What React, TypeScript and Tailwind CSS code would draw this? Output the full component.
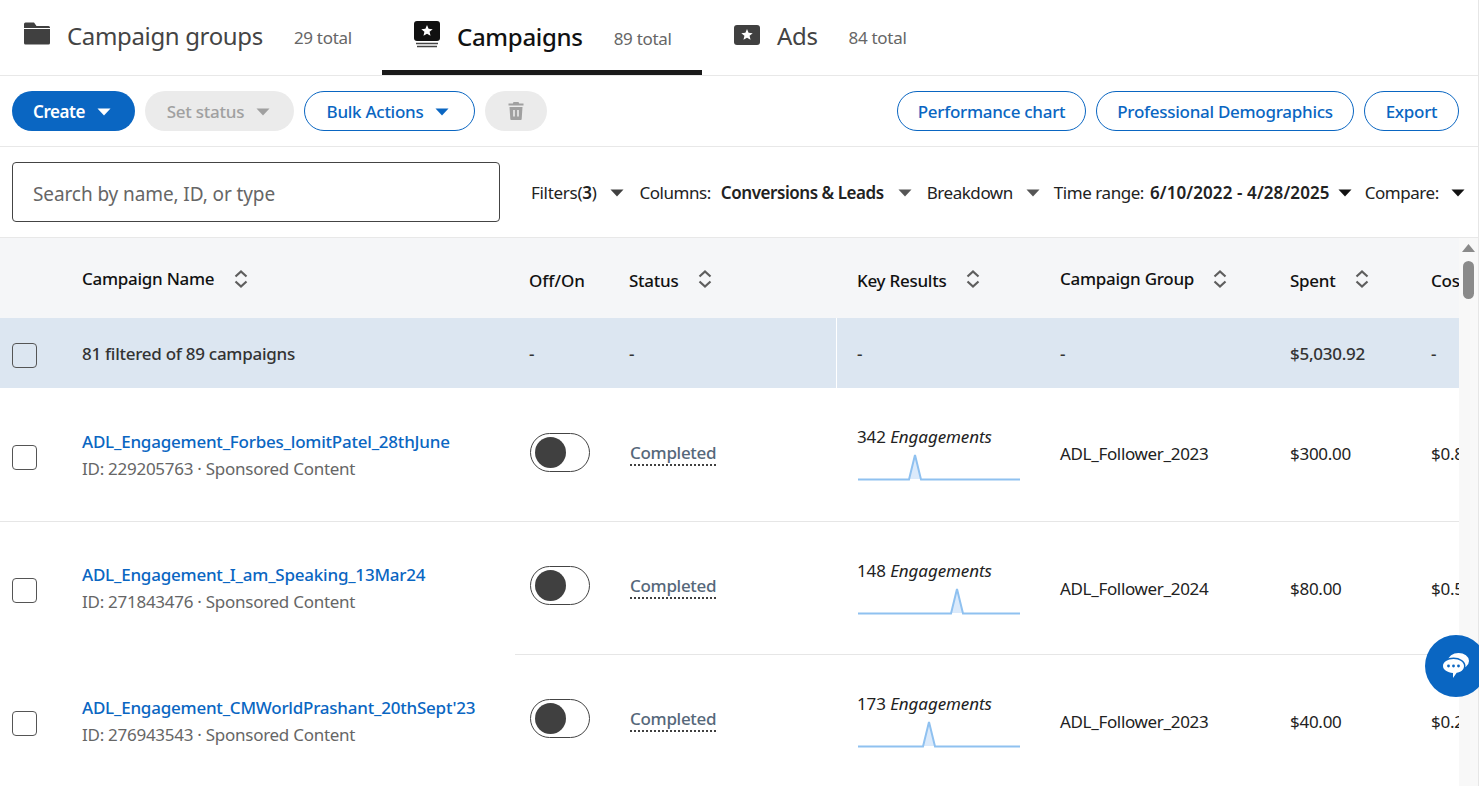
import React from 'react';

const campaigns = [
  { name: 'ADL_Engagement_Forbes_lomitPatel_28thJune', id: '229205763', results: '342', group: 'ADL_Follower_2023', spent: '$300.00', cost: '$0.88', peak: 57, line: true },
  { name: 'ADL_Engagement_I_am_Speaking_13Mar24', id: '271843476', results: '148', group: 'ADL_Follower_2024', spent: '$80.00', cost: '$0.54', peak: 99, line: false },
  { name: "ADL_Engagement_CMWorldPrashant_20thSept'23", id: '276943543', results: '173', group: 'ADL_Follower_2023', spent: '$40.00', cost: '$0.23', peak: 71, line: false },
];

function Caret({ color = '#404040', className = '' }: { color?: string; className?: string }) {
  return (
    <svg width="14" height="8" viewBox="0 0 14 8" className={className}>
      <path d="M0.5 0.5h13L7 7.5z" fill={color} />
    </svg>
  );
}

function SortIcon({ className = '' }: { className?: string }) {
  return (
    <svg width="16" height="20" viewBox="0 0 16 20" fill="none" stroke="#5e5e5e" strokeWidth="2.2" className={className}>
      <path d="M2.5 7.5 8 2.5l5.5 5M2.5 12.5 8 17.5l5.5-5" />
    </svg>
  );
}

function Star({ cx, cy, r }: { cx: number; cy: number; r: number }) {
  const pts = Array.from({ length: 10 }, (_, i) => {
    const a = -Math.PI / 2 + (i * Math.PI) / 5;
    const d = i % 2 === 0 ? r : r * 0.45;
    return `${cx + d * Math.cos(a)},${cy + d * Math.sin(a)}`;
  }).join(' ');
  return <polygon points={pts} fill="#fff" />;
}

function Sparkline({ peak }: { peak: number }) {
  return (
    <svg width="162" height="32" viewBox="0 0 162 32" className="block mt-[2px] ml-px">
      <path d={`M${peak - 6} 29 L${peak} 5 L${peak + 6} 29z`} fill="#dbeafb" />
      <path d={`M0 29.5H${peak - 6}L${peak} 5L${peak + 6} 29.5H162`} fill="none" stroke="#8fc1f0" strokeWidth="2" />
    </svg>
  );
}

function Tab({ icon, label, total, active, width }: { icon: React.ReactNode; label: string; total: string; active?: boolean; width: string }) {
  return (
    <div className={`flex items-center h-full ${width} ${active ? 'border-b-[5px] border-[#1a1a1a] pt-[3px]' : 'pb-[4px]'}`}>
      {icon}
      <span className={`text-[24px] leading-none ${active ? 'text-[#111] font-medium tracking-[-0.3px]' : 'text-[#444] tracking-[-0.35px]'}`}>{label}</span>
      <span className="text-[17px] text-[#666] ml-[31px] mt-[5px] tracking-[-0.3px]">{total}</span>
    </div>
  );
}

function Outline({ children, width }: { children: React.ReactNode; width: string }) {
  return (
    <button className={`h-10 ${width} flex items-center justify-center gap-[12px] rounded-full border border-[#0a66c2] text-[#0a66c2] text-[17px] font-medium tracking-[-0.28px] pt-[2px]`}>
      {children}
    </button>
  );
}

function Row({ c, border }: { c: (typeof campaigns)[number]; border: boolean }) {
  const valueOffset = border ? '-mt-[2px]' : 'mt-[2px]';
  return (
    <div className="relative flex items-center h-[133px] shrink-0 text-[17px] tracking-[-0.27px]">
      <div className="w-[82px] pl-3 shrink-0 mt-[6px]">
        <div className="w-[25px] h-[25px] rounded-[4px] border border-[#555] bg-white" />
      </div>
      <div className="w-[447px] shrink-0 mt-[2px]">
        <div className="font-medium text-[#0a66c2] leading-[26px] tracking-[-0.22px]">{c.name}</div>
        <div className="text-[#666] leading-[28px]">ID: {c.id} · Sponsored Content</div>
      </div>
      <div className="w-[100px] shrink-0">
        <div className="ml-px w-[60px] h-[39px] rounded-full border border-[#444] flex items-center pl-[4px] bg-white -mt-[5px]">
          <div className="w-[31px] h-[31px] rounded-full bg-[#404040]" />
        </div>
      </div>
      <div className="w-[228px] shrink-0 -mt-[4px]">
        <span className="ml-px text-[#56687a] font-medium tracking-[-0.3px] border-b-2 border-dotted border-[#404040] leading-[22px] inline-block">Completed</span>
      </div>
      <div className={`w-[203px] shrink-0 ${border ? '-mt-[1px]' : 'mt-[1px]'}`}>
        <div className="leading-[22px] text-[#222] tracking-[-0.1px]">{c.results} <em>Engagements</em></div>
        <Sparkline peak={c.peak} />
      </div>
      <div className={`w-[230px] shrink-0 text-[#222] tracking-[-0.33px] ${valueOffset}`}>{c.group}</div>
      <div className={`w-[141px] shrink-0 text-[#222] ${valueOffset}`}>{c.spent}</div>
      <div className={`flex-1 text-[#222] whitespace-nowrap ${valueOffset}`}>{c.cost}</div>
      <div className={`absolute -bottom-px right-0 h-px bg-[#e6e6e6] ${border ? 'left-0' : 'left-[515px]'}`} />
    </div>
  );
}

export default function App() {
  return (
    <div className="h-[786px] w-full overflow-hidden bg-white font-['Noto_Sans','Open_Sans',sans-serif] flex flex-col border-r border-[#e6e6e6]">
      <div className="h-[76px] shrink-0 border-b border-[#e8e8e8] flex items-stretch pl-[24px]">
        <Tab
          width="w-[358px]"
          label="Campaign groups"
          total="29 total"
          icon={
            <svg width="26" height="24" viewBox="0 0 26 24" className="mr-[17px] -mt-[6px]">
              <path d="M0 3a1.5 1.5 0 0 1 1.5-1.5H10L12.5 5H24.5A1.5 1.5 0 0 1 26 6.5V22a1.5 1.5 0 0 1-1.5 1.5h-23A1.500 1.500 0 0 1 0 22z" fill="#404040" />
              <path d="M0 7.5h26" stroke="#fff" strokeWidth="1" />
            </svg>
          }
        />
        <Tab
          active
          width="w-[320px] pl-[32px]"
          label="Campaigns"
          total="89 total"
          icon={
            <svg width="26" height="27" viewBox="0 0 26 27" className="mr-[17px] -mt-[5px]">
              <rect x="0" y="0" width="26" height="20" rx="3" fill="#111" />
              <Star cx={13} cy={10} r={6} />
              <path d="M2 22.500h22M3 25.500h20" stroke="#444" strokeWidth="1.600" />
            </svg>
          }
        />
        <Tab
          width="w-[260px] pl-[32px]"
          label="Ads"
          total="84 total"
          icon={
            <svg width="26" height="20" viewBox="0 0 26 20" className="mr-[17px] -mt-[2px]">
              <rect width="26" height="20" rx="3" fill="#404040" />
              <Star cx={13} cy={10} r={6} />
            </svg>
          }
        />
      </div>

      <div className="h-[71px] shrink-0 border-b border-[#e8e8e8] flex items-center pl-3 pr-[19px]">
        <div className="flex items-center gap-[10px]">
          <button className="h-10 w-[123px] flex items-center justify-center gap-[12px] rounded-full bg-[#0a66c2] text-white text-[17px] font-semibold tracking-[-0.45px] pr-[3px] pt-[2px]">
            Create <Caret color="#fff" />
          </button>
          <button className="h-10 w-[149px] flex items-center justify-center gap-[12px] rounded-full bg-[#ebebeb] text-[#a0a0a0] text-[17px] font-medium tracking-[-0.25px] pr-[2px] pt-[2px]">
            Set status <Caret color="#a0a0a0" />
          </button>
          <Outline width="w-[171px] pr-[3px]">
            Bulk Actions <Caret color="#0a66c2" />
          </Outline>
          <button className="h-10 w-[62px] flex items-center justify-center rounded-full bg-[#ebebeb]">
            <svg width="16" height="18" viewBox="0 0 16 18">
              <path d="M5.500 0h5l.7 1.500H15.500V3.500H.5V1.500h4.300zM1.500 5h13l-.8 12a1 1 0 0 1-1 1H3.300a1 1 0 0 1-1-1z" fill="#a0a0a0" />
              <path d="M6 8v6.500M10 8v6.500" stroke="#ebebeb" strokeWidth="1.600" />
            </svg>
          </button>
        </div>
        <div className="ml-auto flex items-center gap-[10px]">
          <Outline width="w-[189px]">Performance chart</Outline>
          <Outline width="w-[258px]">Professional Demographics</Outline>
          <Outline width="w-[95px]">Export</Outline>
        </div>
      </div>

      <div className="h-[91px] shrink-0 border-b border-[#e8e8e8] flex items-center pl-3 whitespace-nowrap text-[17px] text-[#222] tracking-[-0.45px]">
        <div className="w-[488px] h-[60px] rounded-[4px] border border-[#444] flex items-center pl-5 pt-[5px] text-[19px] text-[#666] tracking-[-0.1px]">
          Search by name, ID, or type
        </div>
        <div className="ml-[31px] mt-[2px] flex items-center">
          <span className="tracking-[-0.3px]">Filters(<b className="font-semibold">3</b>)</span>
          <Caret className="ml-[14px]" />
          <span className="ml-[15px]">Columns:</span>
          <span className="ml-[10px] font-semibold">Conversions &amp; Leads</span>
          <Caret className="ml-[14px]" color="#555" />
          <span className="ml-[15px]">Breakdown</span>
          <Caret className="ml-[13px]" color="#555" />
          <span className="ml-[14px]">Time range:</span>
          <span className="ml-[6px] font-semibold tracking-[0.1px]">6/10/2022 - 4/28/2025</span>
          <Caret className="ml-[8px]" color="#111" />
          <span className="ml-[13px]">Compare:</span>
          <Caret className="ml-[12px]" color="#111" />
        </div>
      </div>

      <div className="flex-1 min-h-0 flex">
        <div className="flex-1 min-w-0 overflow-hidden whitespace-nowrap">
          <div className="h-[80px] bg-[#f5f6f8] flex items-center text-[17px] font-medium text-[#111] tracking-[-0.27px]">
            <div className="w-[82px] shrink-0" />
            <div className="w-[447px] shrink-0 flex items-center gap-[19px] mt-[2px]">Campaign Name <SortIcon /></div>
            <div className="w-[100px] shrink-0 mt-[6px] tracking-[0px]">Off/On</div>
            <div className="w-[228px] shrink-0 flex items-center gap-[19px] mt-[2px]"><span className="mt-[3px]">Status</span> <SortIcon /></div>
            <div className="w-[203px] shrink-0 flex items-center gap-[19px] mt-[2px]"><span className="mt-[3px]">Key Results</span> <SortIcon /></div>
            <div className="w-[230px] shrink-0 flex items-center gap-[18px] mt-[2px]">Campaign Group <SortIcon /></div>
            <div className="w-[141px] shrink-0 flex items-center gap-[19px] mt-[2px]"><span className="mt-[3px]">Spent</span> <SortIcon /></div>
            <div className="flex-1 mt-[6px]">Cost</div>
          </div>
          <div className="relative h-[70px] bg-[#dce6f1] flex items-center text-[17px] text-[#333] font-medium tracking-[-0.27px] pt-[2px]">
            <div className="w-[82px] pl-3 shrink-0 mt-[2px]">
              <div className="w-[25px] h-[25px] rounded-[4px] border border-[#555]" />
            </div>
            <div className="w-[447px] shrink-0">81 filtered of 89 campaigns</div>
            <div className="w-[100px] shrink-0">-</div>
            <div className="w-[228px] shrink-0">-</div>
            <div className="w-[203px] shrink-0">-</div>
            <div className="w-[230px] shrink-0">-</div>
            <div className="w-[141px] shrink-0">$5,030.92</div>
            <div className="flex-1">-</div>
            <div className="absolute left-[836px] top-0 bottom-0 w-px bg-white" />
          </div>
          {campaigns.map(c => (
            <Row key={c.id} c={c} border={c.line} />
          ))}
        </div>
        <div className="w-[19px] shrink-0 bg-[#f8f8f8] flex flex-col items-center pt-[6px]">
          <svg width="13" height="8" viewBox="0 0 13 8"><path d="M6.500 0 13 8H0z" fill="#8a8a8a" /></svg>
          <div className="w-[11px] h-[38px] rounded-full bg-[#8a8a8a] mt-[9px]" />
        </div>
      </div>

      <button className="absolute left-[1425px] top-[635px] w-[62px] h-[62px] rounded-full bg-[#0a66c2] flex items-center justify-center">
        <svg width="26" height="26" viewBox="0 0 26 26">
          <ellipse cx="15.500" cy="8" rx="10.500" ry="8" fill="#fff" />
          <ellipse cx="10.500" cy="13" rx="12" ry="8.500" fill="#0a66c2" />
          <path d="M10.500 6c5.800 0 10.500 3 10.500 7s-3.500 6.300-7.300 6.800L10 25v-5.100C4.500 19.500 0 17 0 13s4.700-7 10.500-7z" fill="#fff" />
          <circle cx="5.500" cy="13" r="1.400" fill="#0a66c2" />
          <circle cx="10.500" cy="13" r="1.400" fill="#0a66c2" />
          <circle cx="15.500" cy="13" r="1.400" fill="#0a66c2" />
        </svg>
      </button>
    </div>
  );
}
